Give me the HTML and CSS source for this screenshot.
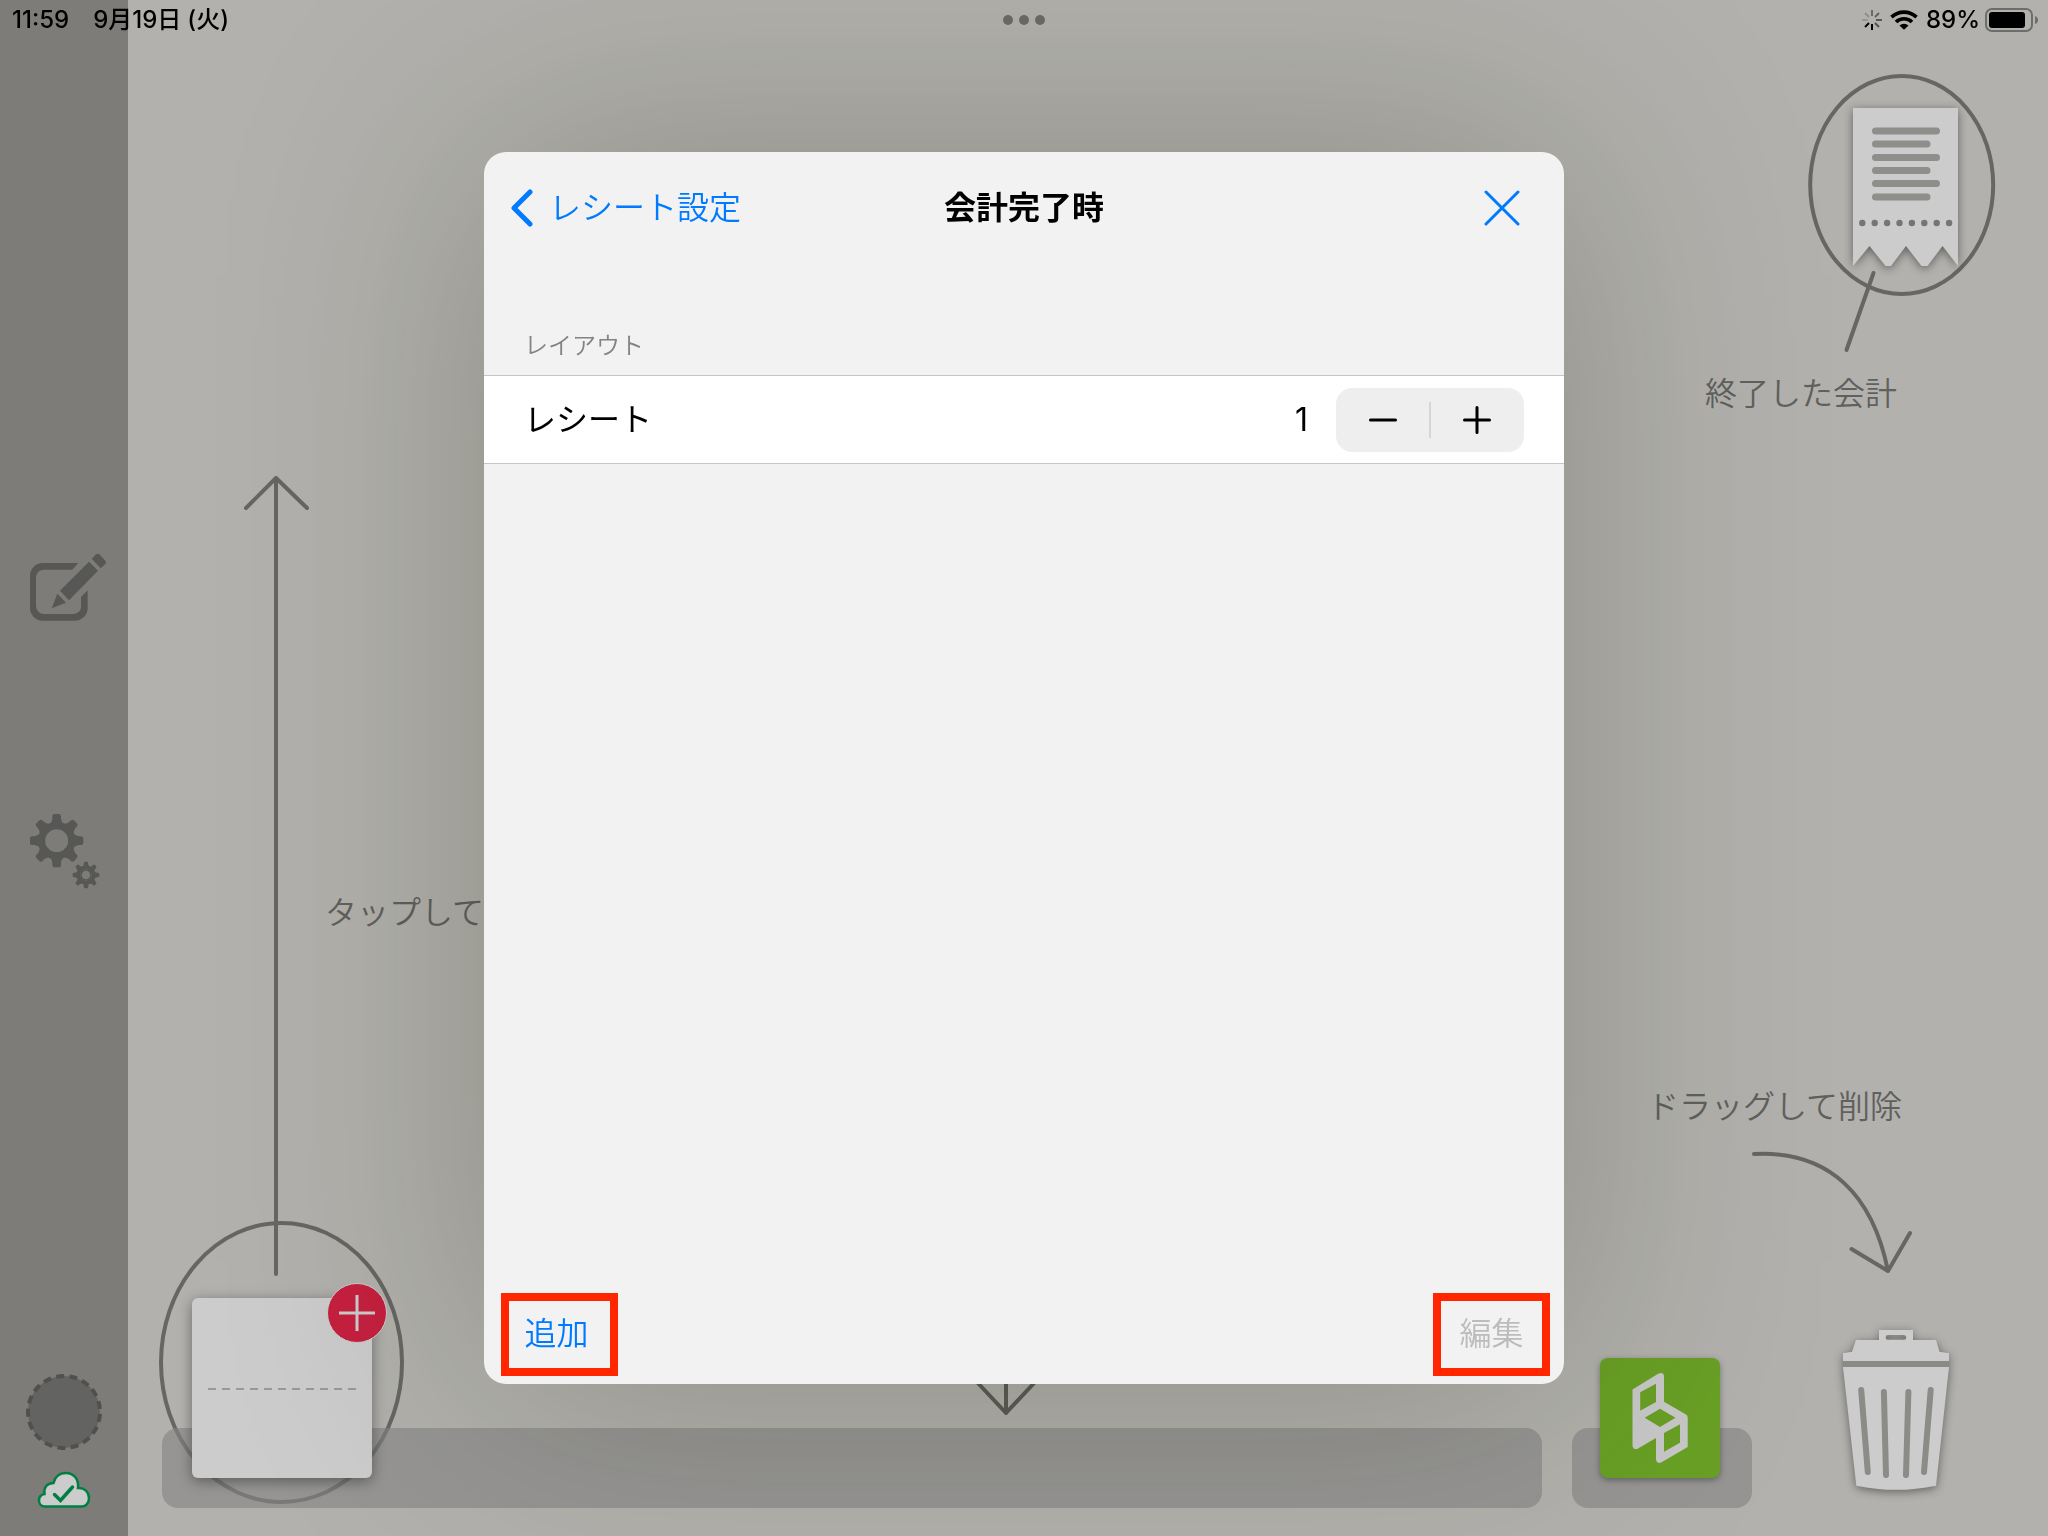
FILE: index.html
```html
<!DOCTYPE html>
<html lang="ja">
<head>
<meta charset="utf-8">
<meta name="viewport" content="width=device-width, initial-scale=1">
<title>会計完了時</title>
<link rel="stylesheet" href="styles.css">
</head>
<body>
<div class="app">
  <nav class="sidebar">
    <button class="side-btn side-edit" aria-label="編集モード">
      <svg width="77" height="68" viewBox="90 99 231 204">
        <path d="M235 129H128a38 38 0 0 0-38 38v97a38 38 0 0 0 38 38h97a38 38 0 0 0 38-38v-53l-20 20v29a22 22 0 0 1-22 22h-89a24 24 0 0 1-24-24v-85a24 24 0 0 1 24-24h85z"/>
        <path d="M180 212l87-87 27 27-87 89zM172 221l26 27-43 17zM275 116l13-13q5-4 10 0l18 19q5 5 0 10l-14 13z"/>
      </svg>
    </button>
    <button class="side-btn side-gear" aria-label="設定">
      <svg width="70" height="75" viewBox="-80 -80 210 225">
        <defs>
          <path id="tooth" d="M-22-50Q-14-56-13-66V-72Q-13-80-6-80H6Q13-80 13-72V-66Q14-56 22-50L0-34z"/>
          <g id="gear">
            <circle r="45" fill="none" stroke="#575755" stroke-width="21"/>
            <use href="#tooth"/><use href="#tooth" transform="rotate(45)"/><use href="#tooth" transform="rotate(90)"/><use href="#tooth" transform="rotate(135)"/>
            <use href="#tooth" transform="rotate(180)"/><use href="#tooth" transform="rotate(225)"/><use href="#tooth" transform="rotate(270)"/><use href="#tooth" transform="rotate(315)"/>
          </g>
        </defs>
        <use href="#gear"/>
        <g transform="translate(88 103) scale(.5)"><use href="#gear"/><circle r="30" fill="none" stroke="#575755" stroke-width="9"/></g>
      </svg>
    </button>
    <div class="side-foot">
      <svg width="76" height="76" viewBox="-38 -38 76 76">
        <circle r="36" fill="#636362"/>
        <circle r="36" fill="none" stroke="#50504e" stroke-width="4" stroke-dasharray="8 5.300" transform="rotate(3)"/>
      </svg>
      <svg class="cloud" width="54" height="38" viewBox="0 0 54 38">
        <path d="M8 35.500C4 35.500 2 32.500 2 29.500 2 25.500 4.500 23.500 7.500 23 6.500 16.500 10 12 16.500 12 18 5.500 22.500 2 29 2 37 2 42 8.500 41 17 47.500 16.500 52 21 52 27 52 32 49 35.500 45 35.500z" fill="#ccc" stroke="#007f43" stroke-width="2.500"/>
        <path d="M17.500 23.500l6 6L35.500 16" fill="none" stroke="#007f43" stroke-width="3.500" stroke-linecap="round"/>
      </svg>
    </div>
  </nav>

  <main class="workspace">
    <section class="hint-receipt">
      <svg width="192" height="300" viewBox="1806 72 192 300">
        <g fill="none" stroke="#666663" stroke-width="4" stroke-linecap="round">
          <ellipse cx="1901.700" cy="185" rx="91.500" ry="109"/>
          <path d="M1873.500 273L1846.500 350"/>
        </g>
        <path class="lifted" fill="#ccc" d="M1853 108H1958V266L1942.500 246 1927.500 266H1921.500L1906 246 1891 266H1885.500L1869.500 246 1853 266z"/>
        <g stroke="#8e8e8a" stroke-width="7" stroke-linecap="round">
          <path d="M1875.500 131h61M1875.500 144h51.500M1875.500 157.500h61M1875.500 170.500h51.500M1875.500 183.500h61M1875.500 197h51.500"/>
          <path stroke="#757572" stroke-width="6.400" stroke-dasharray="0 12.400" d="M1862.300 223h88"/>
        </g>
      </svg>
      <p>終了した会計</p>
    </section>

    <section class="hint-new">
      <svg width="246" height="1030" viewBox="159 476 246 1030">
        <g fill="none" stroke="#666663" stroke-width="4" stroke-linecap="round" stroke-linejoin="round">
          <path d="M276 1274V479M246 508L276 478 307 508"/>
          <ellipse cx="281.500" cy="1362.500" rx="120.500" ry="139.500"/>
        </g>
      </svg>
      <p>タップして伝票を作成</p>
    </section>

    <svg class="hint-down" width="64" height="60" viewBox="-32 -58 64 60" fill="none" stroke="#5b5b55" stroke-width="4" stroke-linejoin="round">
      <path d="M0-58V0M-30-32L0 0 30-32"/>
    </svg>

    <section class="hint-trash">
      <p>ドラッグして削除</p>
      <svg width="164" height="124" viewBox="1750 1150 164 124" fill="none" stroke="#666663" stroke-width="4" stroke-linecap="round" stroke-linejoin="round">
        <path d="M1754 1154C1830 1150 1873 1196 1888 1271M1851.500 1249L1888 1271 1910 1233"/>
      </svg>
    </section>

    <footer class="dock">
      <div class="tray tray-main">
        <button class="new-slip" aria-label="新しい伝票">
          <svg width="150" height="4" viewBox="0 0 150 4"><path d="M1 3h149" stroke="#999" stroke-width="2" stroke-dasharray="8 6"/></svg>
          <span class="badge">
            <svg width="36" height="36" viewBox="0 0 36 36"><path d="M18 0v36M0 18h36" stroke="#ccc" stroke-width="3"/></svg>
          </span>
        </button>
      </div>
      <div class="tray tray-logo">
        <button class="logo" aria-label="ホーム">
          <svg width="120" height="120" viewBox="0 0 120 120">
            <path fill="#c8c8c8" fill-rule="evenodd" d="M58.500 15.500Q63.500 13.500 64 18V43.700L86 56.500Q87.700 57.500 87.700 59.500V89L62 104Q57 106.500 56 102V80L38 90.500Q33.500 92.500 32.500 88V31.500zM40.200 34.300V52.700L56 44V25.700zM60 50.700L44.700 59.700 60 69 75.500 59.700zM80 66.300L64 75V93.700L80 84.700z"/>
          </svg>
        </button>
      </div>
      <button class="trash" aria-label="削除">
        <svg width="106" height="162" viewBox="0 0 106 162">
          <path fill="#8a8a87" d="M1 30h104v8H1z"/>
          <path fill="#ccc" fill-rule="evenodd" d="M36 0H70V10H93L96.500 21.700 106 23.300V31H0V23.300L9 21.700 13 10H36zM45 5Q42.600 5 42.600 7.400T45 9.700H61Q63.300 9.700 63.300 7.400T61 5zM0 37H106L93 155.700Q53 164 13.300 155.700z"/>
          <path stroke="#8b8b88" stroke-width="6" stroke-linecap="round" d="M18.200 60L24.800 142M40.900 62L43 145M65.400 62L63 145M87.700 60L81 142"/>
        </svg>
      </button>
    </footer>
  </main>
</div>

<header class="status">
  <time class="clock">11:59</time>
  <time class="date">9月19日<span class="day">(火)</span></time>
  <span class="dots" aria-hidden="true"><i></i><i></i><i></i></span>
  <svg class="spin" width="20" height="20" viewBox="-10 -10 20 20" stroke="#000" stroke-width="2">
    <path d="M0 4V10"/><path d="M-3-3L-7-7" opacity=".2"/><path d="M0-4V-10" opacity=".4"/><path d="M3-3L7-7" opacity=".45"/><path d="M4 0H10" opacity=".5"/><path d="M3 3L7 7" opacity=".55"/><path d="M-3 3L-7 7"/><path d="M-4 0H-10" opacity=".15"/>
  </svg>
  <svg class="wifi" width="28" height="20" viewBox="0 0 28 20">
    <path d="M1.500 7.200A18 18 0 0 1 26.500 7.200M6 12A11.500 11.500 0 0 1 22 12" fill="none" stroke="#000" stroke-width="3.700"/>
    <path d="M14 19.800L9.500 15.600A6.300 6.300 0 0 1 18.500 15.600z"/>
  </svg>
  <span class="percent">89%</span>
  <svg width="54" height="24" viewBox="0 0 54 24">
    <rect x="1" y="1" width="46" height="22" rx="6" fill="none" stroke="#6d6d6a" stroke-width="2"/>
    <rect x="4" y="4" width="36" height="16" rx="3"/>
    <path d="M50 8q3 1 3 4t-3 4z" fill="#6d6d6a"/>
  </svg>
</header>

<div class="overlay">
  <div class="modal" role="dialog" aria-labelledby="modal-title">
    <div class="modal-head">
      <button class="back">
        <svg width="24" height="38" viewBox="0 0 24 38"><path d="M21 3L5 19 21 35" fill="none" stroke="currentColor" stroke-width="5" stroke-linecap="round" stroke-linejoin="round"/></svg>
        レシート設定
      </button>
      <h1 id="modal-title">会計完了時</h1>
      <button class="close" aria-label="閉じる">
        <svg width="36" height="36" viewBox="0 0 36 36"><path d="M2 2L34 34M34 2L2 34" stroke="currentColor" stroke-width="3" stroke-linecap="round"/></svg>
      </button>
    </div>
    <h2>レイアウト</h2>
    <div class="row">
      <span class="row-name">レシート</span>
      <output class="count">1</output>
      <div class="stepper">
        <button aria-label="減らす"><svg width="28" height="28" viewBox="0 0 28 28"><path d="M1.500 14h25" stroke="#000" stroke-width="3" stroke-linecap="round"/></svg></button>
        <button aria-label="増やす"><svg width="28" height="28" viewBox="0 0 28 28"><path d="M1.500 14h25M14 1.500v25" stroke="#000" stroke-width="3" stroke-linecap="round"/></svg></button>
      </div>
    </div>
    <div class="modal-foot">
      <button class="marked">追加</button>
      <button class="marked" disabled>編集</button>
    </div>
  </div>
</div>
</body>
</html>
```
FILE: styles.css
```css
* { box-sizing: border-box; }

body {
  margin: 0;
  font-family: Inter, "Noto Sans CJK JP", sans-serif;
  font-size: 32px;
  line-height: 40px;
  color: #000;
}

button {
  margin: 0;
  padding: 0;
  border: 0;
  background: none;
  font: inherit;
  color: inherit;
}

svg { display: block; flex: none; }
p, h1, h2 { margin: 0; }

.app {
  display: flex;
  height: 100vh;
  background: #b2b1ad;
}

/* Sidebar */
.sidebar {
  display: flex;
  flex-direction: column;
  align-items: center;
  width: 128px;
  padding-bottom: 27px;
  background: #7d7c79;
  fill: #575755;
}

.side-btn {
  align-self: flex-start;
  margin-left: 30px;
}

.side-edit { margin-top: 36vh; }
.side-gear { margin-top: 193px; }

.side-foot {
  display: flex;
  flex-direction: column;
  align-items: center;
  gap: 21px;
  margin-top: auto;
}

/* Workspace */
.workspace {
  position: relative;
  display: flex;
  flex: 1;
  flex-direction: column;
  justify-content: flex-end;
  overflow: hidden;
  font-weight: 350;
  color: #60605d;
}

.hint-receipt {
  position: absolute;
  top: 72px;
  right: 50px;
}

.hint-receipt p {
  position: absolute;
  top: 302px;
  right: 101px;
  white-space: nowrap;
}

.lifted { filter: drop-shadow(0 2px 5px rgba(0, 0, 0, .45)); }

.hint-new {
  position: absolute;
  bottom: 30px;
  left: 31px;
  display: flex;
}

.hint-new p {
  position: absolute;
  top: 417px;
  left: 166px;
  white-space: nowrap;
}

.hint-down {
  position: absolute;
  bottom: 121px;
  left: 846px;
}

.hint-trash {
  position: absolute;
  right: 134px;
  bottom: 262px;
  display: flex;
  flex-direction: column;
  align-items: flex-end;
  gap: 23px;
}

.hint-trash p { margin-right: 12px; white-space: nowrap; }

.dock {
  position: relative;
  display: flex;
  align-items: flex-end;
  gap: 30px;
  padding: 0 99px 28px 34px;
}

.tray {
  position: relative;
  height: 80px;
  border-radius: 16px;
  background: rgba(133, 133, 133, .62);
}

.tray-main { flex: 1; }
.tray-logo { width: 180px; }

.new-slip {
  position: absolute;
  bottom: 30px;
  left: 30px;
  display: grid;
  place-items: center;
  width: 180px;
  height: 180px;
  border-radius: 6px;
  background: #ccc;
  box-shadow: 0 3px 14px rgba(0, 0, 0, .4);
}

.badge {
  position: absolute;
  top: -15px;
  right: -15px;
  display: grid;
  place-items: center;
  width: 60px;
  height: 60px;
  border: 1px solid #ccc;
  border-radius: 50%;
  background: #c6203f;
}

.logo {
  position: absolute;
  bottom: 30px;
  left: 28px;
  border-radius: 8px;
  background: #69a025;
  box-shadow: 0 2px 6px rgba(0, 0, 0, .35);
}

.trash {
  margin: 0 0 16px 61px;
  filter: drop-shadow(0 2px 5px rgba(0, 0, 0, .45));
}

/* Status bar */
.status {
  position: fixed;
  inset: 0 0 auto;
  display: flex;
  align-items: center;
  height: 40px;
  padding: 0 9px 0 12px;
  font-size: 24px;
  font-weight: 500;
}

.date { margin-left: 24px; }
.day { margin-left: 6px; }

.dots {
  position: absolute;
  left: 50%;
  display: flex;
  gap: 6px;
  transform: translateX(-50%);
}

.dots i {
  width: 10px;
  height: 10px;
  border-radius: 50%;
  background: #6c6c67;
}

.spin { margin-left: auto; }
.wifi { margin: 0 8px; }
.percent { margin-right: 5px; }

/* Dialog */
.overlay {
  position: fixed;
  inset: 0;
  display: grid;
  place-items: center;
  pointer-events: none;
}

.modal {
  display: flex;
  flex-direction: column;
  width: 1080px;
  max-width: 100%;
  height: 80.2vh;
  border-radius: 22px;
  background: #f2f2f2;
  box-shadow: 0 0 260px rgba(32, 36, 0, .26);
  pointer-events: auto;
}

.modal-head {
  display: grid;
  grid-template-columns: 1fr auto 1fr;
  align-items: center;
  height: 112px;
  padding: 0 44px;
}

.back {
  display: flex;
  align-items: center;
  gap: 16px;
  margin-left: -19px;
  font-weight: 350;
  color: #007aff;
}

h1 {
  font-size: 32px;
  font-weight: 700;
}

.close { justify-self: end; color: #007aff; }

h2 {
  margin-top: 62px;
  padding: 0 40px;
  font-size: 24px;
  font-weight: 350;
  color: #838387;
}

.row {
  display: flex;
  align-items: center;
  height: 89px;
  margin-top: 9px;
  padding: 0 40px;
  border: solid #c6c6c8;
  border-width: 1px 0;
  background: #fff;
}

.row-name { flex: 1; }
.count { margin-right: 28px; }

.stepper {
  display: flex;
  width: 188px;
  height: 64px;
  border-radius: 16px;
  background: #eee;
}

.stepper button {
  position: relative;
  display: grid;
  flex: 1;
  place-items: center;
}

.stepper button + button::before {
  content: "";
  position: absolute;
  left: -1px;
  width: 2px;
  height: 36px;
  background: #d5d5d6;
}

.modal-foot {
  display: flex;
  justify-content: space-between;
  margin-top: auto;
  padding: 0 14px 8px 17px;
}

.marked {
  width: 117px;
  height: 83px;
  padding-right: 6px;
  border: 8px solid #ff2600;
  font-weight: 350;
  color: #007aff;
}

.marked:disabled {
  padding-right: 0;
  color: #bcbcbd;
}
```
